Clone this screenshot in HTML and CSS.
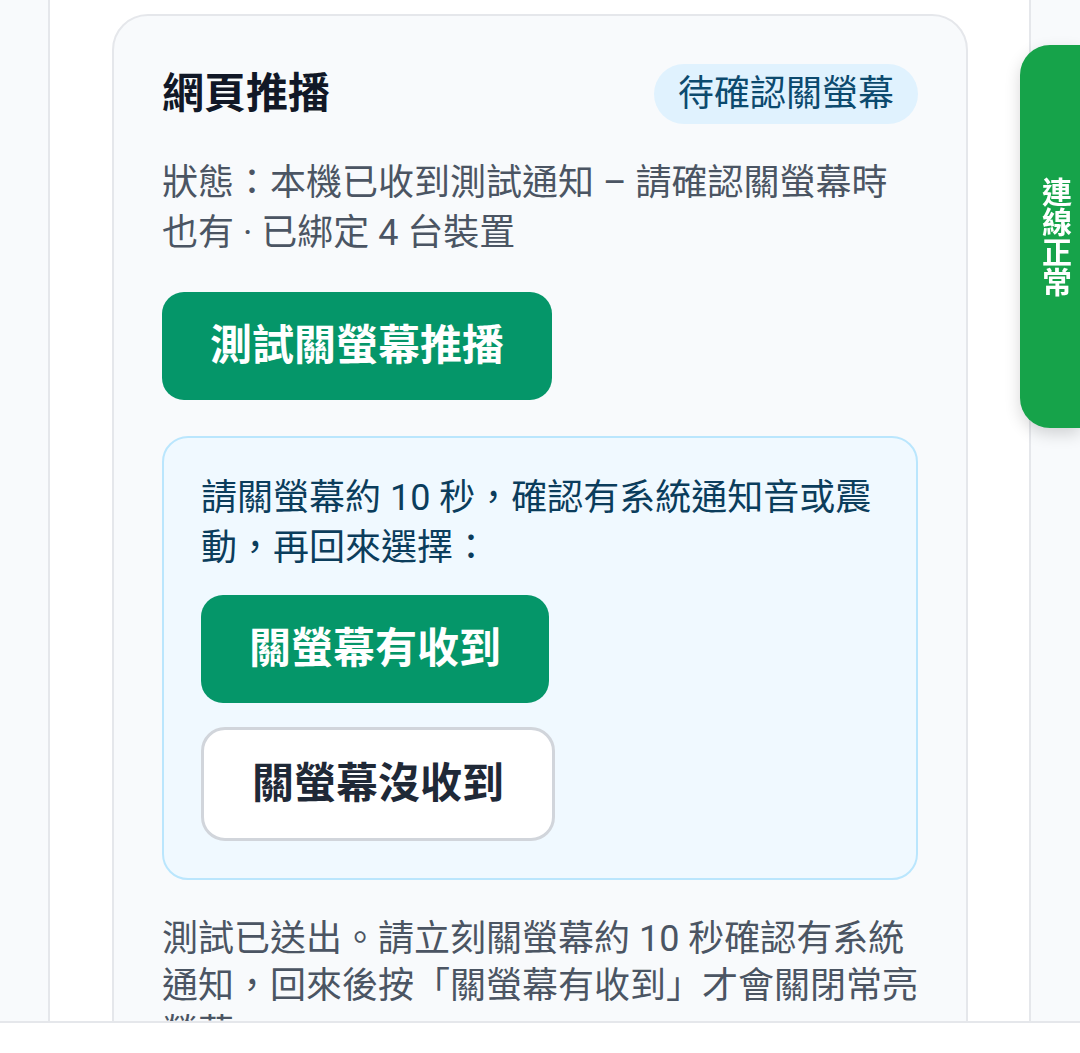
FILE: index.html
```html
<!DOCTYPE html>
<html lang="zh-Hant">
<head>
<meta charset="utf-8">
<title>網頁推播</title>
<link rel="stylesheet" href="styles.css">
</head>
<body>
<main class="column">
  <section class="card">
    <header class="card-head">
      <h2 class="card-title">網頁推播</h2>
      <span class="badge">待確認關螢幕</span>
    </header>
    <p class="status">狀態：本機已收到測試通知 – 請確認關螢幕時也有 · 已綁定 4 台裝置</p>
    <div class="actions">
      <button class="btn btn-green" type="button">測試關螢幕推播</button>
    </div>
    <div class="confirm">
      <p class="confirm-text">請關螢幕約 10 秒，確認有系統通知音或震動，再回來選擇：</p>
      <div class="confirm-actions">
        <button class="btn btn-green" type="button">關螢幕有收到</button>
        <button class="btn btn-outline" type="button">關螢幕沒收到</button>
      </div>
    </div>
    <p class="note">測試已送出。請立刻關螢幕約 10 秒確認有系統通知，回來後按「關螢幕有收到」才會關閉常亮螢幕。</p>
  </section>
</main>
<div class="conn-tab"><span class="conn-text">連線正常</span></div>
<div class="bottom-bar"></div>
</body>
</html>
```

FILE: styles.css
```css
* { box-sizing: border-box; }

html, body {
  margin: 0;
  padding: 0;
}

body {
  background: #f8fafc;
  font-family: Roboto, "Noto Sans CJK TC", "Noto Sans", sans-serif;
  color: #111827;
  overflow: hidden;
}

.column {
  margin-left: 48px;
  width: 983px;
  min-height: 100vh;
  background: #ffffff;
  border-left: 2px solid #e5e7eb;
  border-right: 2px solid #e5e7eb;
  padding: 14px 61px 0 62px;
}

.card {
  background: #f8fafc;
  border: 2px solid #e5e7eb;
  border-radius: 36px;
  padding: 48px 48px 60px;
  display: flex;
  flex-direction: column;
}

.card-head {
  display: flex;
  align-items: center;
  justify-content: space-between;
  height: 60px;
}

.card-title {
  margin: 0;
  font-size: 42px;
  font-weight: 700;
  line-height: 56px;
  color: #111827;
}

.badge {
  display: inline-block;
  height: 60px;
  line-height: 60px;
  padding: 0 24px;
  border-radius: 30px;
  background: #e0f2fe;
  color: #0c4a6e;
  font-size: 36px;
}

.status {
  margin: 34px 0 0;
  font-size: 36px;
  line-height: 50px;
  color: #4b5563;
}

.actions {
  margin-top: 34px;
  display: flex;
}

.btn {
  font-family: Roboto, "Noto Sans CJK TC", sans-serif;
  font-size: 42px;
  font-weight: 700;
  line-height: 56px;
  padding: 26px 48px;
  border-radius: 22px;
  border: none;
  cursor: pointer;
}

.btn-green {
  background: #059669;
  color: #ffffff;
}

.btn-outline {
  background: #ffffff;
  color: #1f2937;
  border: 3px solid #d1d5db;
  border-radius: 24px;
}

.confirm {
  margin-top: 36px;
  background: #f0f9ff;
  border: 2px solid #bae6fd;
  border-radius: 26px;
  padding: 35px 37px 37px;
}

.confirm-text {
  margin: 0;
  font-size: 36px;
  line-height: 50px;
  color: #0b3d5c;
}

.confirm-actions {
  margin-top: 22px;
  display: flex;
  flex-direction: column;
  align-items: flex-start;
  gap: 24px;
}

.note {
  margin: 36px 0 0;
  font-size: 36px;
  line-height: 47px;
  color: #4b5563;
}

.conn-tab {
  position: fixed;
  top: 45px;
  right: 0;
  width: 60px;
  height: 383px;
  background: #16a34a;
  border-radius: 30px 0 0 30px;
  box-shadow: 0 6px 16px rgba(0, 0, 0, 0.16);
  display: flex;
  align-items: center;
  justify-content: center;
  padding-left: 8px;
}

.conn-text {
  writing-mode: vertical-rl;
  color: #ffffff;
  font-size: 30px;
  font-weight: 700;
  line-height: 30px;
  letter-spacing: 0;
}

.bottom-bar {
  position: fixed;
  left: 0;
  right: 0;
  bottom: 0;
  height: 32px;
  background: #ffffff;
  border-top: 2px solid #e5e7eb;
}
```
